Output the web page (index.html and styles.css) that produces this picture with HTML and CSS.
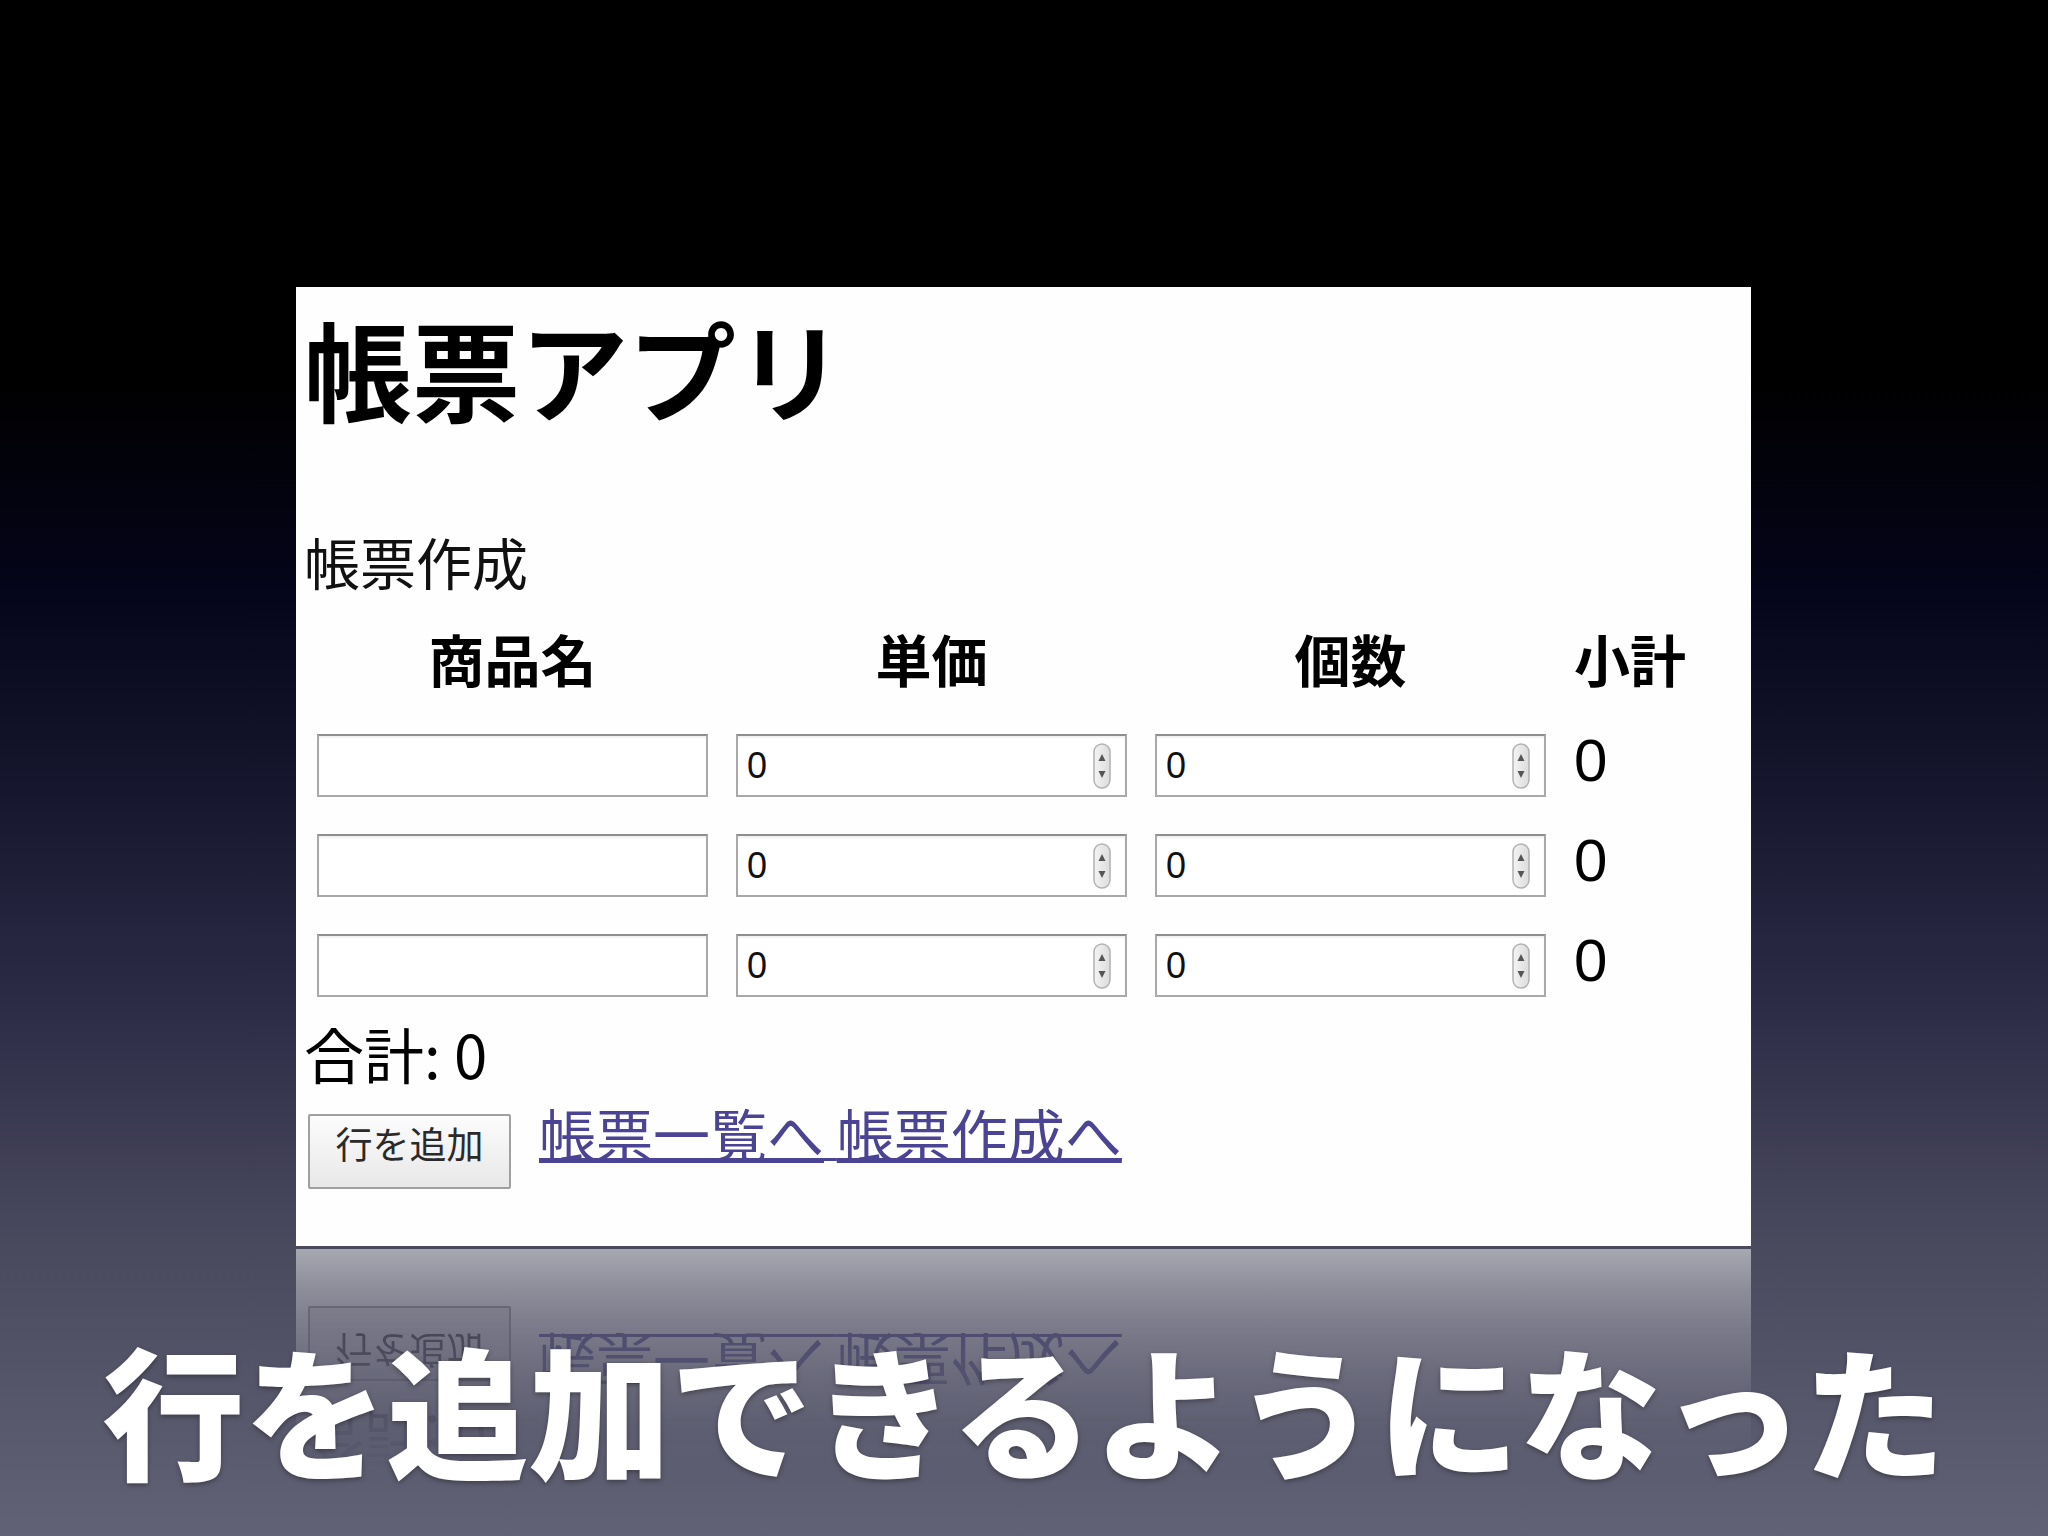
FILE: index.html
```html
<!DOCTYPE html>
<html lang="ja">
<head>
<meta charset="utf-8">
<title>帳票アプリ</title>
<link rel="stylesheet" href="styles.css">
</head>
<body>
<div class="slide">
  <section class="panel">
    <h1 class="title">帳票アプリ</h1>
    <h2 class="subtitle">帳票作成</h2>
    <div class="sheet">
      <div class="th">商品名</div>
      <div class="th">単価</div>
      <div class="th">個数</div>
      <div class="th">小計</div>

      <input class="field" type="text">
      <label class="num"><input class="num-input" type="text" value="0"><svg class="spin" width="18" height="46" viewBox="0 0 18 46"><defs><linearGradient id="sg" x1="0" y1="0" x2="1" y2="0"><stop offset="0" stop-color="#f4f4f4"/><stop offset="1" stop-color="#dcdcdc"/></linearGradient></defs><rect x="1" y="1" width="16" height="44" rx="8" fill="url(#sg)" stroke="#b3b3b3" stroke-width="1.5"/><path d="M9 11 L12.5 18 H5.5 Z" fill="#555"/><path d="M9 35 L12.5 28 H5.5 Z" fill="#555"/></svg></label>
      <label class="num"><input class="num-input" type="text" value="0"><svg class="spin" width="18" height="46" viewBox="0 0 18 46"><rect x="1" y="1" width="16" height="44" rx="8" fill="url(#sg)" stroke="#b3b3b3" stroke-width="1.5"/><path d="M9 11 L12.5 18 H5.5 Z" fill="#555"/><path d="M9 35 L12.5 28 H5.5 Z" fill="#555"/></svg></label>
      <div class="sub">0</div>

      <input class="field" type="text">
      <label class="num"><input class="num-input" type="text" value="0"><svg class="spin" width="18" height="46" viewBox="0 0 18 46"><rect x="1" y="1" width="16" height="44" rx="8" fill="url(#sg)" stroke="#b3b3b3" stroke-width="1.5"/><path d="M9 11 L12.5 18 H5.5 Z" fill="#555"/><path d="M9 35 L12.5 28 H5.5 Z" fill="#555"/></svg></label>
      <label class="num"><input class="num-input" type="text" value="0"><svg class="spin" width="18" height="46" viewBox="0 0 18 46"><rect x="1" y="1" width="16" height="44" rx="8" fill="url(#sg)" stroke="#b3b3b3" stroke-width="1.5"/><path d="M9 11 L12.5 18 H5.5 Z" fill="#555"/><path d="M9 35 L12.5 28 H5.5 Z" fill="#555"/></svg></label>
      <div class="sub">0</div>

      <input class="field" type="text">
      <label class="num"><input class="num-input" type="text" value="0"><svg class="spin" width="18" height="46" viewBox="0 0 18 46"><rect x="1" y="1" width="16" height="44" rx="8" fill="url(#sg)" stroke="#b3b3b3" stroke-width="1.5"/><path d="M9 11 L12.5 18 H5.5 Z" fill="#555"/><path d="M9 35 L12.5 28 H5.5 Z" fill="#555"/></svg></label>
      <label class="num"><input class="num-input" type="text" value="0"><svg class="spin" width="18" height="46" viewBox="0 0 18 46"><rect x="1" y="1" width="16" height="44" rx="8" fill="url(#sg)" stroke="#b3b3b3" stroke-width="1.5"/><path d="M9 11 L12.5 18 H5.5 Z" fill="#555"/><path d="M9 35 L12.5 28 H5.5 Z" fill="#555"/></svg></label>
      <div class="sub">0</div>
    </div>
    <div class="footer">
      <p class="total">合計: 0</p>
      <div class="actions">
        <button class="btn" type="button">行を追加</button>
        <span class="links"><a href="#">帳票一覧へ</a> <a href="#">帳票作成へ</a></span>
      </div>
    </div>
  </section>

  <div class="reflection" aria-hidden="true">
    <div class="reflection-inner">
      <div class="reflection-pad"></div>
      <div class="footer">
        <p class="total">合計: 0</p>
        <div class="actions">
          <span class="btn">行を追加</span>
          <span class="links"><span>帳票一覧へ</span> <span>帳票作成へ</span></span>
        </div>
      </div>
    </div>
  </div>

  <p class="caption">行を追加できるようになった</p>
</div>
</body>
</html>
```
FILE: styles.css
```css
* {
  box-sizing: border-box;
}

html, body {
  margin: 0;
  padding: 0;
}

body {
  width: 2048px;
  height: 1536px;
  overflow: hidden;
  font-family: "Noto Sans CJK JP", "Liberation Sans", sans-serif;
  background: linear-gradient(to bottom,
    #000000 0%,
    #000000 24.7%,
    #05051c 39%,
    #17172f 52%,
    #2c2b46 65%,
    #4a4a5f 81.4%,
    #626276 100%);
}

.slide {
  position: relative;
  height: 1536px;
  padding: 287px 0 0 296px;
}

/* ---------- white browser panel ---------- */
.panel {
  width: 1455px;
  height: 962px;
  background: #fefefe;
  border-bottom: 3px solid #4a4a5d;
  padding-left: 8px;
  color: #000;
  display: flex;
  flex-direction: column;
}

.title {
  margin: 26px 0 0;
  font-size: 108px;
  line-height: 108px;
  font-weight: 700;
}

.subtitle {
  margin: 112px 0 0;
  font-size: 56px;
  line-height: 56px;
  font-weight: 400;
  color: #111;
}

.sheet {
  margin: 41px 0 0 13px;
  display: grid;
  grid-template-columns: 391px 391px 391px auto;
  column-gap: 28px;
  row-gap: 37px;
  align-items: center;
  justify-content: start;
}

.th {
  font-size: 56px;
  line-height: 56px;
  font-weight: 700;
  text-align: center;
  margin-bottom: 11px;
}

.field,
.num {
  width: 391px;
  height: 63px;
  border: 2px solid #a9a9a9;
  border-top-color: #8e8e8e;
  background: #fff;
  box-shadow: inset 0 2px 2px rgba(0, 0, 0, 0.06);
  margin: 0;
}

.field {
  padding: 0 10px;
  font-size: 36px;
  outline: none;
}

.num {
  display: flex;
  align-items: center;
  padding-right: 14px;
}

.num-input {
  flex: 1;
  min-width: 0;
  height: 100%;
  border: 0;
  padding: 0 0 0 9px;
  background: transparent;
  outline: none;
  font-family: "Liberation Sans", sans-serif;
  font-size: 36px;
  color: #111;
}

.spin {
  flex: none;
  display: block;
}

.sub {
  align-self: start;
  font-family: "Liberation Sans", sans-serif;
  font-size: 60px;
  line-height: 53px;
  color: #000;
}

/* ---------- footer ---------- */
.footer {
  flex: none;
  height: 249px;
  padding-top: 26px;
}

.total {
  margin: 0;
  font-size: 60px;
  line-height: 60px;
  color: #000;
}

.actions {
  display: flex;
  align-items: flex-start;
  gap: 28px;
  margin-top: 21px;
  padding-left: 4px;
}

.btn {
  display: inline-flex;
  align-items: center;
  justify-content: center;
  flex: none;
  width: 203px;
  height: 75px;
  margin-top: 10px;
  padding: 0 0 16px;
  font-family: "Noto Sans CJK JP", sans-serif;
  font-size: 37px;
  line-height: 37px;
  color: #2a2a2a;
  background: linear-gradient(#fcfcfc, #e8e8e8);
  border: 2px solid #a0a0a0;
  border-radius: 2px;
}

.links {
  font-size: 57px;
  line-height: 57px;
  color: #4b4393;
  text-decoration: underline;
  text-decoration-thickness: 3px;
  text-underline-offset: 1px;
}

.links a {
  color: #4b4393;
}

/* ---------- reflection ---------- */
.reflection {
  width: 1455px;
  height: 287px;
  overflow: hidden;
  -webkit-mask-image: linear-gradient(to bottom,
    rgba(0,0,0,0.52) 0px,
    rgba(0,0,0,0.36) 40px,
    rgba(0,0,0,0.24) 80px,
    rgba(0,0,0,0.12) 130px,
    rgba(0,0,0,0.03) 180px,
    rgba(0,0,0,0) 230px);
  mask-image: linear-gradient(to bottom,
    rgba(0,0,0,0.52) 0px,
    rgba(0,0,0,0.36) 40px,
    rgba(0,0,0,0.24) 80px,
    rgba(0,0,0,0.12) 130px,
    rgba(0,0,0,0.03) 180px,
    rgba(0,0,0,0) 230px);
}

.reflection-inner {
  height: 287px;
  background: #fff;
  padding-left: 8px;
  transform: scaleY(-1);
  display: flex;
  flex-direction: column;
}

.reflection-pad {
  flex: none;
  height: 38px;
}

/* ---------- slide caption ---------- */
.caption {
  position: absolute;
  left: 0;
  right: 0;
  top: 1336px;
  margin: 0;
  text-align: center;
  font-size: 142px;
  line-height: 142px;
  font-weight: 900;
  color: #ffffff;
  text-shadow: 0 2px 5px rgba(0, 0, 0, 0.35);
}
```
